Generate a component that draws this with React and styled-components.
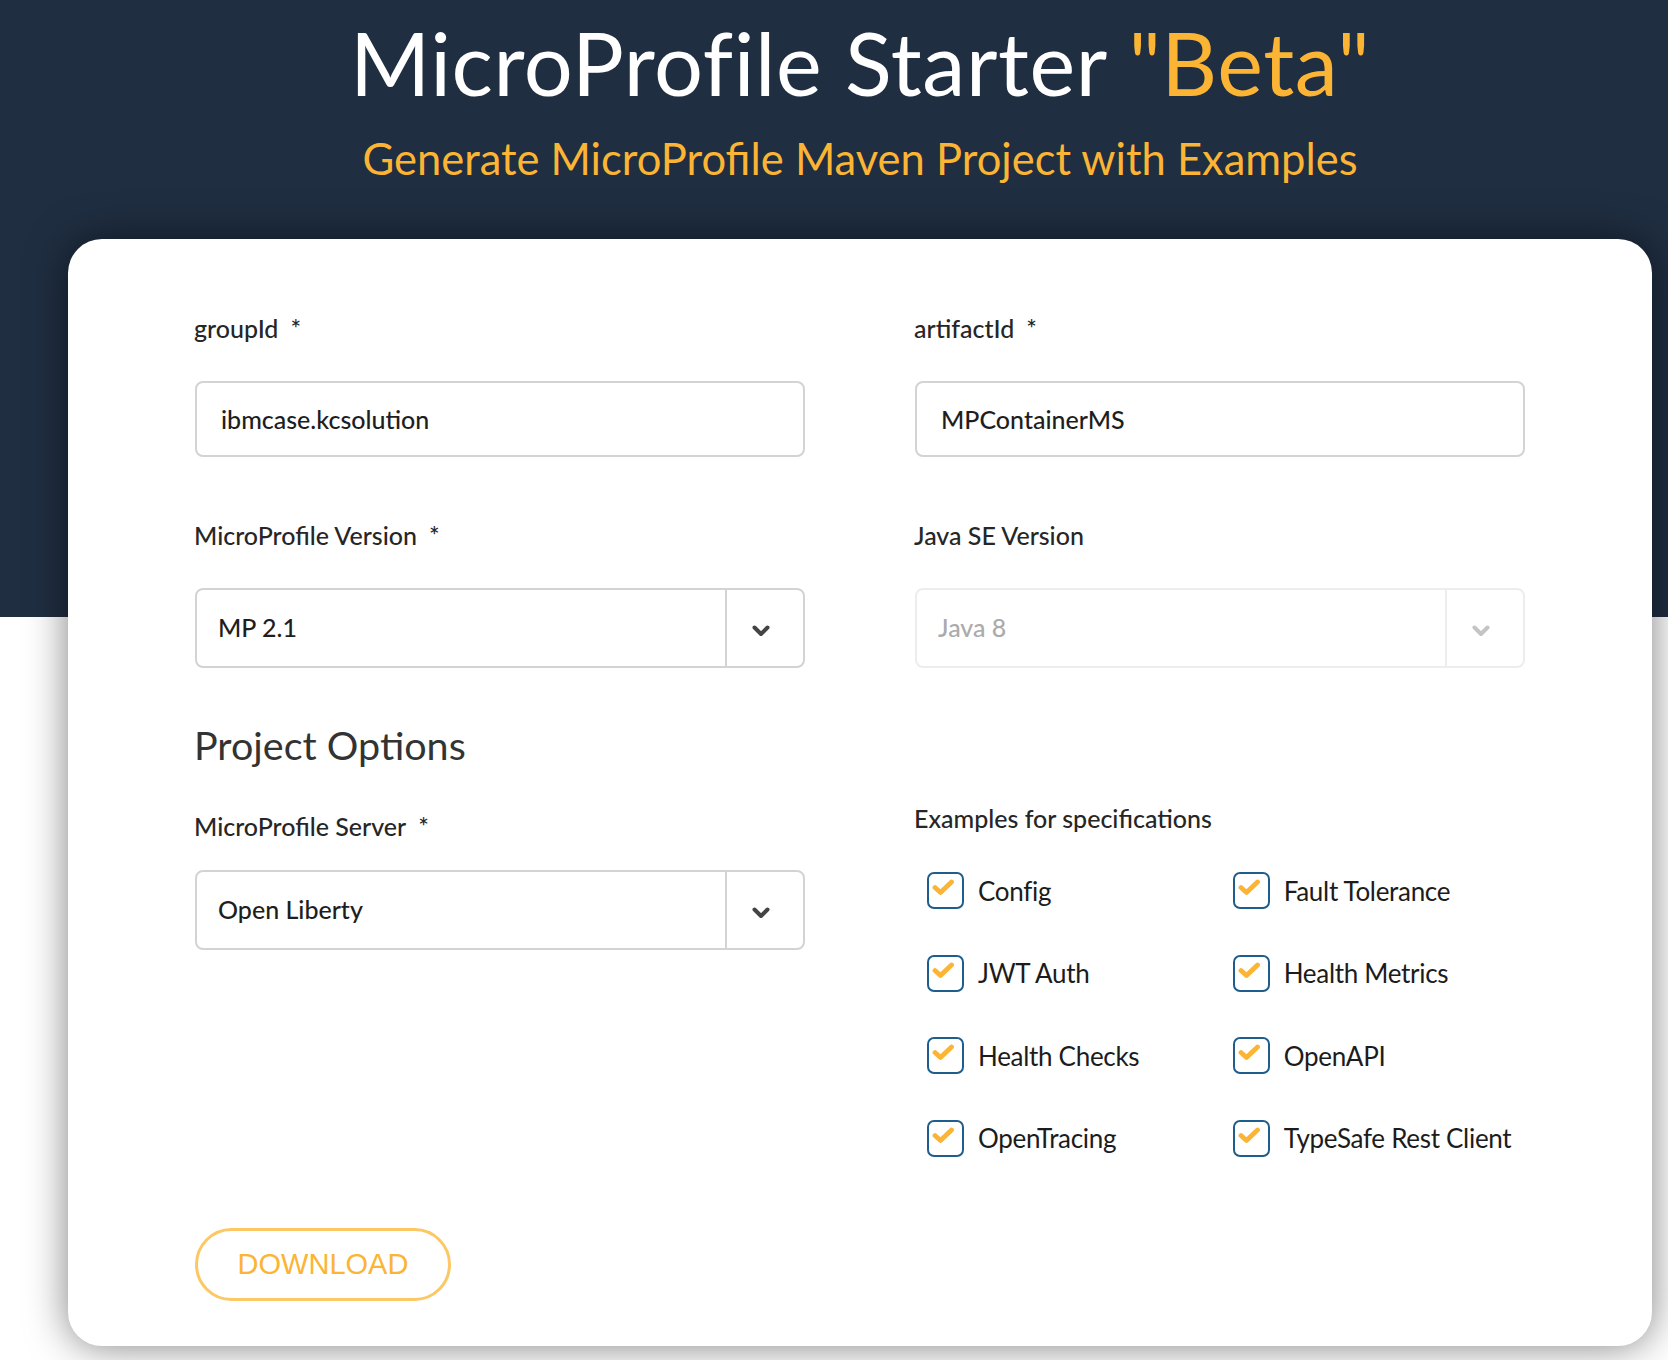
import React from "react";
import styled, { createGlobalStyle } from "styled-components";

const GlobalStyle = createGlobalStyle`
  html, body { margin: 0; padding: 0; }
  body {
    background: #ffffff;
    font-family: "Lato", "Liberation Sans", sans-serif;
    overflow: hidden;
  }
`;

const Page = styled.div`
  width: 1668px;
  height: 1360px;
  overflow: hidden;
  background: linear-gradient(to bottom, #1f2e41 0, #1f2e41 617px, #ffffff 617px);
`;

const Container = styled.div`
  width: 1584px;
  margin-left: 68px;
  padding-top: 13px;
`;

const Title = styled.h1`
  margin: 0;
  font-family: "Lato", sans-serif;
  font-weight: 400;
  font-size: 86.5px;
  line-height: 100px;
  color: #ffffff;
  text-align: center;
  letter-spacing: 0.6px;
`;

const Accent = styled.span`
  color: #fbb434;
`;

const Subtitle = styled.h2`
  margin: 20px 0 0;
  font-family: "Lato", sans-serif;
  font-weight: 400;
  font-size: 43.5px;
  line-height: 50px;
  color: #fbb434;
  text-align: center;
`;

const Card = styled.section`
  margin-top: 56px;
  background: #ffffff;
  border-radius: 34px;
  box-shadow: 0 0 40px rgba(0, 0, 0, 0.5);
  padding: 74px 127px 45px;
`;

const Row = styled.div`
  display: grid;
  grid-template-columns: 610px 610px;
  column-gap: 110px;
  margin-top: ${(p) => p.$top || 0}px;
`;

const Column = styled.div`
  display: flex;
  flex-direction: column;
`;

const Label = styled.label`
  display: block;
  font-family: "Lato", sans-serif;
  font-weight: 500;
  font-size: 25px;
  line-height: 30px;
  color: #262626;
  margin-left: -1px;
  margin-top: ${(p) => p.$top || 0}px;
  margin-bottom: ${(p) => (p.$gap === undefined ? 38 : p.$gap)}px;
`;

const Star = styled.span`
  margin-left: 12px;
`;

const TextInput = styled.input`
  box-sizing: border-box;
  width: 100%;
  height: 76px;
  border: 2px solid #d3d3d3;
  border-radius: 8px;
  padding: 0 24px;
  font-family: "Lato", sans-serif;
  font-weight: 500;
  font-size: 25px;
  color: #1e1e1e;
  background: #fff;
  outline: none;
`;

const SelectBox = styled.div`
  box-sizing: border-box;
  display: flex;
  height: 80px;
  border: 2px solid ${(p) => (p.$disabled ? "#ededed" : "#d3d3d3")};
  border-radius: 8px;
  background: #fff;
`;

const SelectValue = styled.div`
  flex: 1;
  display: flex;
  align-items: center;
  padding-left: 21px;
  padding-bottom: 3px;
  font-family: "Lato", sans-serif;
  font-weight: 500;
  font-size: 25px;
  color: ${(p) => (p.$disabled ? "#ababab" : "#1e1e1e")};
`;

const ArrowCell = styled.div`
  width: 78px;
  display: flex;
  align-items: center;
  justify-content: center;
  padding-top: 5px;
  padding-right: 8px;
  box-sizing: border-box;
  border-left: 2px solid ${(p) => (p.$disabled ? "#ededed" : "#d3d3d3")};
`;

const Heading = styled.h3`
  margin: 0 0 0 -1px;
  font-family: "Lato", sans-serif;
  font-weight: 400;
  font-size: 39.5px;
  line-height: 48px;
  color: #333333;
`;

const CheckGrid = styled.div`
  display: grid;
  grid-template-columns: 305.7px auto;
  grid-auto-rows: 37px;
  row-gap: 45.5px;
  padding-left: 12px;
`;

const CheckItem = styled.label`
  display: flex;
  align-items: center;
  gap: 14px;
  font-family: "Lato", sans-serif;
  font-weight: 400;
  font-size: 26px;
  letter-spacing: -0.3px;
  color: #1c1c1c;
  white-space: nowrap;
`;

const CheckBox = styled.span`
  box-sizing: border-box;
  width: 37px;
  height: 37px;
  flex: none;
  border: 2.5px solid #1f5e8c;
  border-radius: 7px;
  display: flex;
  align-items: flex-start;
  justify-content: flex-start;
  padding: 5px 0 0 3px;
`;

const DownloadButton = styled.button`
  margin-top: 71px;
  box-sizing: border-box;
  width: 256px;
  height: 73px;
  border: 3.5px solid #fdc763;
  border-radius: 37px;
  background: #fff;
  color: #fbb434;
  font-family: "Liberation Sans", Arial, sans-serif;
  font-size: 29px;
  font-weight: 400;
  padding: 0;
  cursor: pointer;
`;

const Chevron = ({ color }) => (
  <svg width="18" height="12" viewBox="0 0 18 12" aria-hidden="true">
    <path d="M2.5 2.5 L9 9 L15.5 2.5" fill="none" stroke={color} strokeWidth="4" strokeLinecap="round" strokeLinejoin="round" />
  </svg>
);

const Check = () => (
  <svg width="23" height="17" viewBox="0 0 23 17" aria-hidden="true">
    <path d="M3 8.5 L8.5 13.5 L19.5 3" fill="none" stroke="#fbb434" strokeWidth="4.8" strokeLinecap="round" strokeLinejoin="round" />
  </svg>
);

const Select = ({ value, disabled }) => (
  <SelectBox $disabled={disabled}>
    <SelectValue $disabled={disabled}>{value}</SelectValue>
    <ArrowCell $disabled={disabled}>
      <Chevron color={disabled ? "#c4c4c4" : "#444444"} />
    </ArrowCell>
  </SelectBox>
);

const specs = [
  "Config",
  "Fault Tolerance",
  "JWT Auth",
  "Health Metrics",
  "Health Checks",
  "OpenAPI",
  "OpenTracing",
  "TypeSafe Rest Client",
];

export default function App() {
  return (
    <>
      <GlobalStyle />
      <Page>
        <Container>
          <Title>
            MicroProfile Starter <Accent>"Beta"</Accent>
          </Title>
          <Subtitle>Generate MicroProfile Maven Project with Examples</Subtitle>
          <Card>
            <Row>
              <Column>
                <Label>
                  groupId<Star>*</Star>
                </Label>
                <TextInput defaultValue="ibmcase.kcsolution" />
              </Column>
              <Column>
                <Label>
                  artifactId<Star>*</Star>
                </Label>
                <TextInput defaultValue="MPContainerMS" />
              </Column>
            </Row>
            <Row $top={63}>
              <Column>
                <Label>
                  MicroProfile Version<Star>*</Star>
                </Label>
                <Select value="MP 2.1" />
              </Column>
              <Column>
                <Label>Java SE Version</Label>
                <Select value="Java 8" disabled />
              </Column>
            </Row>
            <Row $top={53}>
              <Column>
                <Heading>Project Options</Heading>
                <Label $top={42} $gap={29}>
                  MicroProfile Server<Star>*</Star>
                </Label>
                <Select value="Open Liberty" />
              </Column>
              <Column>
                <Label $top={82} $gap={39}>
                  Examples for specifications
                </Label>
                <CheckGrid>
                  {specs.map((s) => (
                    <CheckItem key={s}>
                      <CheckBox>
                        <Check />
                      </CheckBox>
                      {s}
                    </CheckItem>
                  ))}
                </CheckGrid>
              </Column>
            </Row>
            <DownloadButton>DOWNLOAD</DownloadButton>
          </Card>
        </Container>
      </Page>
    </>
  );
}
